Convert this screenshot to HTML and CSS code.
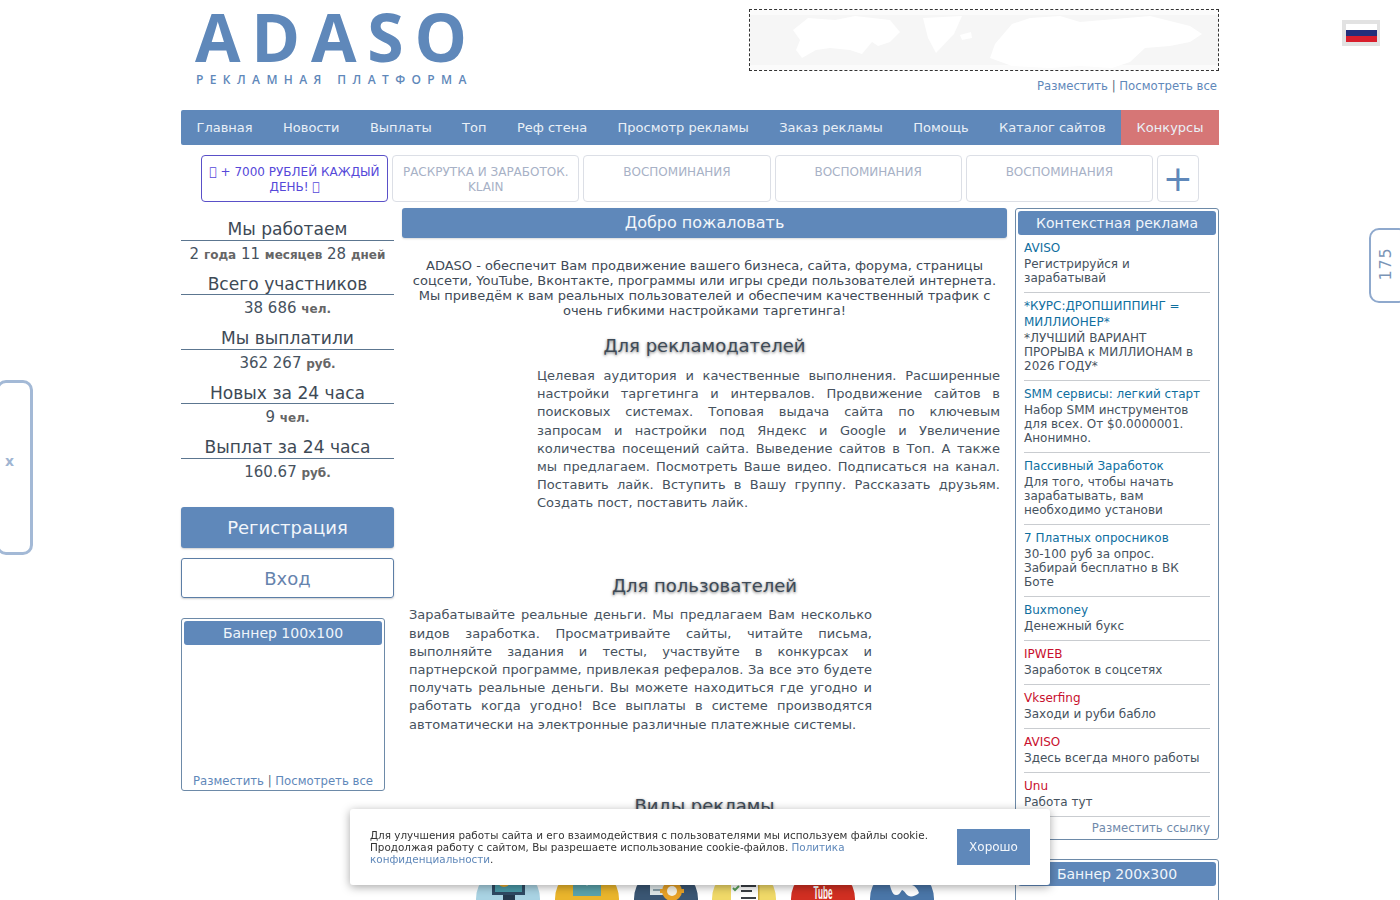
FILE: index.html
```html
<!DOCTYPE html>
<html lang="ru">
<head>
<meta charset="utf-8">
<title>ADASO</title>
<link rel="stylesheet" href="styles.css">
</head>
<body>
<div class="wrap">
  <header class="head">
    <div class="logo">
      <div class="logo-name">ADASO</div>
      <div class="logo-sub">РЕКЛАМНАЯ ПЛАТФОРМА</div>
    </div>
    <div class="top-banner">
      <div class="map">
        <svg viewBox="0 0 468 60" width="468" height="60">
          <rect width="468" height="60" fill="#f6f6f6"/>
          <rect width="468" height="5" fill="#fbfbfb"/>
          <rect y="55" width="468" height="5" fill="#fbfbfb"/>
          <path fill="#fff" d="M43 20L58 8L85 10L105 6L140 10L150 22L140 32L128 36L122 32L112 44L100 40L80 38L66 40L52 48L46 40L50 30Z"/>
          <path fill="#fff" d="M173 8L212 6L204 24L186 43L178 28Z"/>
          <path fill="#fff" d="M210 25L221 22L222 28L212 30Z"/>
          <path fill="#fff" d="M245 34L262 14L280 8L310 6L330 12L400 6L440 16L452 24L440 32L420 36L395 38L380 52L362 58L330 56L300 58L262 56L240 48Z"/>
        </svg>
      </div>
      <div class="top-links"><a>Разместить</a> | <a>Посмотреть все</a></div>
    </div>
  </header>

  <nav class="nav">
    <a class="nav-first">Главная</a><a>Новости</a><a>Выплаты</a><a>Топ</a><a>Реф стена</a><a>Просмотр рекламы</a><a>Заказ рекламы</a><a>Помощь</a><a>Каталог сайтов</a><a class="nav-red">Конкурсы</a>
  </nav>

  <div class="tiles">
    <a class="tile tile-hot">&#xE123; + 7000 РУБЛЕЙ КАЖДЫЙ ДЕНЬ! &#xE123;</a>
    <a class="tile">РАСКРУТКА И ЗАРАБОТОК. KLAIN</a>
    <a class="tile">ВОСПОМИНАНИЯ</a>
    <a class="tile">ВОСПОМИНАНИЯ</a>
    <a class="tile">ВОСПОМИНАНИЯ</a>
    <a class="tile tile-plus">+</a>
  </div>

  <div class="cols">
    <aside class="left">
      <div class="stat"><div class="stat-t">Мы работаем</div><div class="stat-v">2 <b>года</b> 11 <b>месяцев</b> 28 <b>дней</b></div></div>
      <div class="stat"><div class="stat-t">Всего участников</div><div class="stat-v">38 686 <b>чел.</b></div></div>
      <div class="stat"><div class="stat-t">Мы выплатили</div><div class="stat-v">362 267 <b>руб.</b></div></div>
      <div class="stat"><div class="stat-t">Новых за 24 часа</div><div class="stat-v">9 <b>чел.</b></div></div>
      <div class="stat"><div class="stat-t">Выплат за 24 часа</div><div class="stat-v">160.67 <b>руб.</b></div></div>
      <a class="btn btn-reg">Регистрация</a>
      <a class="btn btn-in">Вход</a>
      <div class="box box-100">
        <div class="box-h">Баннер 100х100</div>
        <div class="box-space"></div>
        <div class="box-links"><a>Разместить</a> | <a>Посмотреть все</a></div>
      </div>
    </aside>

    <main class="mid">
      <h1 class="mid-h">Добро пожаловать</h1>
      <div class="mid-body">
        <p class="intro">ADASO - обеспечит Вам продвижение вашего бизнеса, сайта, форума, страницы соцсети, YouTube, Вконтакте, программы или игры среди пользователей интернета. Мы приведём к вам реальных пользователей и обеспечим качественный трафик с очень гибкими настройками таргетинга!</p>
        <h2 class="sec sec-first">Для рекламодателей</h2>
        <div class="block block-a">
          <div class="pic-l"></div>
          <p>Целевая аудитория и качественные выполнения. Расширенные настройки таргетинга и интервалов. Продвижение сайтов в поисковых системах. Топовая выдача сайта по ключевым запросам и настройки под Яндекс и Google и Увеличение количества посещений сайта. Выведение сайтов в Топ. А также мы предлагаем. Посмотреть Ваше видео. Подписаться на канал. Поставить лайк. Вступить в Вашу группу. Рассказать друзьям. Создать пост, поставить лайк.</p>
        </div>
        <h2 class="sec">Для пользователей</h2>
        <div class="block block-b">
          <div class="pic-r"></div>
          <p>Зарабатывайте реальные деньги. Мы предлагаем Вам несколько видов заработка. Просматривайте сайты, читайте письма, выполняйте задания и тесты, участвуйте в конкурсах и партнерской программе, привлекая рефералов. За все это будете получать реальные деньги. Вы можете находиться где угодно и работать когда угодно! Все выплаты в системе производятся автоматически на электронные различные платежные системы.</p>
        </div>
        <h2 class="sec">Виды рекламы</h2>
        <div class="kinds">
          <svg class="kind" viewBox="0 0 64 64"><circle cx="32" cy="32" r="32" fill="#a9d3e3"/><rect x="16" y="4" width="33" height="24" fill="#2f4a63"/><rect x="19" y="7" width="27" height="18" fill="#4a9aa8"/><circle cx="28" cy="14" r="6" fill="#e8a92e"/><rect x="27" y="28" width="12" height="6" fill="#24384c"/></svg>
          <svg class="kind" viewBox="0 0 64 64"><circle cx="32" cy="32" r="32" fill="#eab52c"/><rect x="18" y="4" width="28" height="25" fill="#5ba3ab"/><path d="M22 4h20l-10 15z" fill="#e8f1f2"/></svg>
          <svg class="kind" viewBox="0 0 64 64"><circle cx="32" cy="32" r="32" fill="#3a5673"/><rect x="16" y="4" width="24" height="24" fill="#dfe8ea"/><rect x="19" y="22" width="14" height="2" fill="#8aa0aa"/><circle cx="38" cy="24" r="10" fill="#e8a226"/><circle cx="38" cy="24" r="5" fill="#f6f3e6"/><path d="M35 32h6v4h-6zM26 22h4v4h-4zM46 22h4v4h-4z" fill="#e8a226"/></svg>
          <svg class="kind" viewBox="0 0 64 64"><circle cx="32" cy="32" r="32" fill="#f0d968"/><rect x="19" y="0" width="27" height="60" fill="#fff"/><path d="M21 21l2 2 4-4" stroke="#5aa05a" stroke-width="2" fill="none"/><rect x="29" y="18" width="15" height="2" fill="#3a3f45"/><rect x="29" y="23" width="11" height="2" fill="#3a3f45"/><rect x="29" y="30" width="15" height="2" fill="#3a3f45"/><rect x="46" y="0" width="1.5" height="60" fill="#c9a93a"/></svg>
          <svg class="kind" viewBox="0 0 64 64"><circle cx="32" cy="32" r="32" fill="#d12f22"/><text class="kind-tube" x="32" y="32" text-anchor="middle" textLength="19" lengthAdjust="spacingAndGlyphs">Tube</text></svg>
          <svg class="kind" viewBox="0 0 64 64"><circle cx="32" cy="32" r="32" fill="#4a76a8"/><path d="M17 4h10l5 14c3 0 5-6 7-14h10c-2 8-5 12-7 14 3 1 6 4 7 8-3 3-8 4-10 3-3-1-4-5-7-6-2 3-3 5-6 5-5 0-7-14-9-24z" fill="#fff"/></svg>
        </div>
      </div>
    </main>

    <aside class="right">
      <div class="box box-ads">
        <div class="box-h">Контекстная реклама</div>
        <div class="ad"><a class="ad-t">AVISO</a><div class="ad-d">Регистрируйся и зарабатывай</div></div>
        <div class="ad"><a class="ad-t">*КУРС:ДРОПШИППИНГ = МИЛЛИОНЕР*</a><div class="ad-d">*ЛУЧШИЙ ВАРИАНТ ПРОРЫВА к МИЛЛИОНАМ в 2026 ГОДУ*</div></div>
        <div class="ad"><a class="ad-t">SMM сервисы: легкий старт</a><div class="ad-d">Набор SMM инструментов для всех. От $0.0000001. Анонимно.</div></div>
        <div class="ad"><a class="ad-t">Пассивный Заработок</a><div class="ad-d">Для того, чтобы начать зарабатывать, вам необходимо установи</div></div>
        <div class="ad"><a class="ad-t">7 Платных опросников</a><div class="ad-d">30-100 руб за опрос. Забирай бесплатно в ВК Боте</div></div>
        <div class="ad"><a class="ad-t">Buxmoney</a><div class="ad-d">Денежный букс</div></div>
        <div class="ad"><a class="ad-t ad-red">IPWEB</a><div class="ad-d">Заработок в соцсетях</div></div>
        <div class="ad"><a class="ad-t ad-red">Vkserfing</a><div class="ad-d">Заходи и руби бабло</div></div>
        <div class="ad"><a class="ad-t ad-red">AVISO</a><div class="ad-d">Здесь всегда много работы</div></div>
        <div class="ad"><a class="ad-t ad-red">Unu</a><div class="ad-d">Работа тут</div></div>
        <div class="ad-foot"><a>Разместить ссылку</a></div>
      </div>
      <div class="box box-200">
        <div class="box-h">Баннер 200х300</div>
        <div class="box-tall"></div>
      </div>
    </aside>
  </div>
</div>

<div class="flag"><div class="flag-in"><i class="f-w"></i><i class="f-b"></i><i class="f-r"></i></div></div>
<div class="tab-left"><span>x</span></div>
<div class="tab-right"><span>175</span></div>

<div class="cookie">
  <div class="cookie-text">Для улучшения работы сайта и его взаимодействия с пользователями мы используем файлы cookie. Продолжая работу с сайтом, Вы разрешаете использование cookie-файлов. <a>Политика конфиденциальности</a>.</div>
  <a class="cookie-btn">Хорошо</a>
</div>
</body>
</html>
```
FILE: styles.css
```css
* { box-sizing: border-box; }
html, body { margin: 0; padding: 0; height: 100%; overflow: hidden; background: #fff; }
body { font-family: "DejaVu Sans", sans-serif; font-size: 13px; color: #3e4a56; }
a { color: #5f88ba; text-decoration: none; }

.wrap { width: 1038px; margin: 0 auto; }

/* header */
.head { display: flex; justify-content: space-between; height: 110px; }
.logo { padding: 0 0 0 14px; }
.logo-name { font-family: "Open Sans", sans-serif; font-weight: 700; font-size: 66px; line-height: 72px; letter-spacing: 10.8px; color: #5f88ba; height: 72px; }
.logo-sub { font-family: "Open Sans", sans-serif; font-weight: 600; font-size: 12px; line-height: 16px; letter-spacing: 6.4px; color: #5f88ba; padding-left: 1px; white-space: nowrap; }
.top-banner { width: 470px; padding-top: 9px; }
.map { height: 62px; border: 1px dashed #333; }
.map svg { display: block; }
.top-links { text-align: right; font-size: 11.7px; line-height: 16px; margin-top: 7px; padding-right: 2px; color: #5a6a7a; }

/* nav */
.nav { display: flex; height: 35px; background: #5f88ba; border-radius: 2px 0 0 2px; }
.nav a { padding: 0 15.2px; line-height: 35px; color: #eaf0f7; white-space: nowrap; }
.nav .nav-first { padding-left: 15.5px; }
.nav .nav-red { background: #d67676; margin-left: auto; padding: 0 15.5px; }

/* tiles */
.tiles { display: flex; gap: 4px; padding: 10px 20px 0; height: 63px; }
.tile { flex: 0 0 187.2px; height: 47px; border: 1px solid #dcdfe6; border-radius: 4px; padding: 9px 8px 0; text-align: center; font-size: 12px; line-height: 14.5px; color: #a7b1c6; }
.tile-hot { border-color: #5a50c8; color: #5548d9; padding: 9px 4px 0; }
.tile-plus { flex: 0 0 42px; padding: 0; font-size: 36px; line-height: 46px; color: #5f88ba; font-weight: 400; }

/* columns */
.cols { display: flex; align-items: flex-start; }
.left { width: 213px; margin-right: 8px; padding-top: 9.8px; }
.mid { width: 605px; margin-right: 8px; }
.right { width: 204px; }

.stat { height: 54.5px; text-align: center; }
.stat-t { font-size: 17.1px; line-height: 22.7px; height: 23px; padding-top: .3px; border-bottom: 1px solid #5c7690; color: #3e4a56; }
.stat-v { font-size: 15px; line-height: 26px; color: #46525e; white-space: nowrap; }
.stat-v b { font-size: 12px; color: #666; }

.btn { display: block; text-align: center; border-radius: 3px; }
.btn-reg { margin-top: 17px; height: 41px; line-height: 41px; background: #5f88ba; color: #f2f6fb; font-size: 18px; box-shadow: 0 1px 2px rgba(0,0,0,.2); }
.btn-in { margin-top: 10px; height: 40px; line-height: 40px; border: 1px solid #5c7ea6; color: #6683ad; font-size: 18px; box-shadow: 0 1px 2px rgba(0,0,0,.2); }

.box { border: 1px solid #6d8aa8; border-radius: 3px; padding: 2px; background: #fff; }
.box-h { height: 24px; line-height: 25px; background: #5f88ba; border-radius: 3px; color: #f0f5fa; font-size: 14px; text-align: center; }
.box-100 { width: 204px; height: 173px; margin-top: 20px; }
.box-space { height: 128px; }
.box-links { font-size: 11.7px; line-height: 16px; text-align: center; color: #5a6a7a; }

/* middle */
.mid-h { margin: 0; height: 30px; line-height: 29px; background: #5f88ba; border-radius: 3px; color: #f2f6fb; font-size: 16px; font-weight: 400; text-align: center; box-shadow: 0 1px 2px rgba(0,0,0,.15); }
.mid-body { padding: 0 7px; }
.intro { margin: 0; padding-top: 20px; text-align: center; line-height: 15px; color: #3e4a56; }
.sec { margin: 0; font-size: 18px; line-height: 24px; font-weight: 400; text-align: center; color: #3e4a56; text-shadow: 0 1px 3px rgba(0,0,0,.55); }
.sec-first { margin-top: 16px; }
.block { line-height: 18.2px; text-align: justify; color: #46525e; }
.block p { margin: 0; }
.block-a { height: 216px; padding-top: 9px; }
.block-b { height: 196px; padding-top: 8.4px; }
.pic-l { float: left; width: 128px; height: 128px; }
.pic-r { float: right; width: 128px; height: 128px; }
.kinds { display: flex; gap: 14.8px; justify-content: center; padding: 49px 0 0 1px; }
.kind { width: 64px; height: 64px; flex: none; }
.kind-tube { font-family: "Liberation Sans", sans-serif; font-weight: 700; font-size: 19px; fill: #fff; }

/* right */
.box-ads { height: 632px; }
.ad { margin: 0 6px; padding: 5px 0 7px; border-bottom: 1px solid #c9ccd0; font-size: 12px; line-height: 14px; }
.ad-t { display: block; line-height: 16px; color: #0f6f9f; }
.ad-red { color: #c8102e; }
.ad-d { color: #46525e; padding-top: 1px; }
.ad-foot { padding: 3px 6px 0; font-size: 11.7px; line-height: 16px; text-align: right; }
.ad-foot a { color: #6f89ab; }
.box-200 { margin-top: 19px; height: 340px; }
.box-tall { height: 300px; }

/* overlays */
.flag { position: fixed; left: 1342px; top: 20px; width: 38px; height: 26px; background: #e2e2e2; padding: 4px 3px 4px 4px; }
.flag-in { display: flex; flex-direction: column; height: 18px; }
.flag-in i { display: block; height: 6px; }
.f-w { background: #fff; }
.f-b { background: #232f7a; }
.f-r { background: #d81e2c; }

.tab-left { position: fixed; left: -4px; top: 380px; width: 37px; height: 175px; border: 3px solid #a3b9d6; border-radius: 10px; background: #fff; display: flex; align-items: center; padding-left: 6px; }
.tab-left span { color: #9fb5d2; font-size: 14px; font-weight: 700; line-height: 1; margin-bottom: 14px; }
.tab-right { position: fixed; left: 1369px; top: 228px; width: 40px; height: 75px; border: 2px solid #8fa9cd; border-radius: 10px; background: #fff; }
.tab-right span { position: absolute; left: -1px; top: 24px; font-size: 16px; line-height: 20px; color: #7a94b6; transform: rotate(-90deg); letter-spacing: .8px; }

.cookie { position: fixed; left: 350px; top: 809px; width: 700px; height: 76px; background: #fff; border-radius: 3px; box-shadow: 0 2px 10px rgba(0,0,0,.35); display: flex; align-items: center; justify-content: space-between; padding: 0 20px; }
.cookie-text { width: 570px; font-size: 10.4px; line-height: 12px; color: #333; }
.cookie-btn { width: 73px; height: 36px; line-height: 36px; text-align: center; background: #5f88ba; color: #f2f6fb; font-size: 12px; }
```
